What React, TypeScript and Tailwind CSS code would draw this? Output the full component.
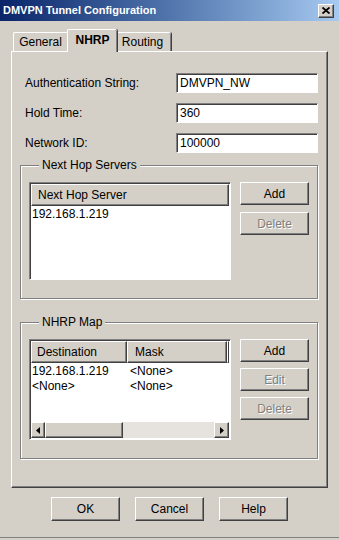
const raised =
  "border border-t-white border-l-white border-r-[#404040] border-b-[#404040] shadow-[inset_-1px_-1px_0_#808080] bg-[#d4d0c8]";
const sunken =
  "border border-t-[#808080] border-l-[#808080] border-r-white border-b-white shadow-[inset_1px_1px_0_#404040] bg-white";
const etched = "border border-[#808080] shadow-[inset_1px_1px_0_#fff,1px_1px_0_#fff]";

function Tab({ label, selected }: { label: string; selected?: boolean }) {
  if (selected) {
    return (
      <div className="relative z-10 -mx-[2px] -mb-px flex h-[23px] w-[50px] items-center justify-center rounded-t-[2px] border-l border-t border-white bg-[#d4d0c8] pb-[2px] font-bold shadow-[1px_0_0_#404040,inset_-1px_0_0_#808080]">
        {label}
      </div>
    );
  }
  return (
    <div className="flex h-[19px] w-[56px] items-center justify-center rounded-t-[2px] border-l border-t border-white pr-[2px] shadow-[1px_0_0_#404040,inset_-1px_0_0_#808080]">
      {label}
    </div>
  );
}

function Field({ label, value }: { label: string; value: string }) {
  return (
    <div className="flex h-[20px] items-center">
      <span className="w-[151px]">{label}</span>
      <div className={`${sunken} flex h-[20px] w-[142px] items-center px-[3px]`}>{value}</div>
    </div>
  );
}

function Button({ label, disabled, w = "w-[69px]", h = "h-[23px]" }: { label: string; disabled?: boolean; w?: string; h?: string }) {
  return (
    <div
      className={`${raised} ${w} ${h} flex items-center justify-center ${
        disabled ? "text-[#808080] [text-shadow:1px_1px_0_#fff]" : ""
      }`}
    >
      {label}
    </div>
  );
}

function Group({ title, className, children }: { title: string; className: string; children: React.ReactNode }) {
  return (
    <div className={`relative w-[298px] ${etched} ${className}`}>
      <span className="absolute -top-[8px] left-[18px] bg-[#d4d0c8] px-[3px] leading-[15px]">{title}</span>
      {children}
    </div>
  );
}

function Arrow({ dir }: { dir: "left" | "right" }) {
  return (
    <svg width="4" height="7" viewBox="0 0 4 7">
      {dir === "left" ? <path d="M4 0 L0 3.5 L4 7 Z" fill="#000" /> : <path d="M0 0 L4 3.5 L0 7 Z" fill="#000" />}
    </svg>
  );
}

export default function App() {
  return (
    <div className="flex h-[540px] w-[339px] flex-col bg-[#d4d0c8] font-['Liberation_Sans',Arial,sans-serif] text-[12px] leading-none text-black">
      <div className="flex h-[21px] shrink-0 items-center justify-between bg-gradient-to-r from-[#0a246a] to-[#a6caf0] pl-[3px] pr-[5px]">
        <span className="text-[11px] font-bold text-white">DMVPN Tunnel Configuration</span>
        <div className={`${raised} flex h-[14px] w-[16px] items-center justify-center`}>
          <svg width="8" height="7" viewBox="0 0 8 7">
            <path d="M0.5 0.5 L7.5 6.5 M7.5 0.5 L0.5 6.5" stroke="#000" strokeWidth="1.8" />
          </svg>
        </div>
      </div>

      <div className="flex h-[30px] shrink-0 items-end pl-[13px]">
        <Tab label="General" />
        <Tab label="NHRP" selected />
        <Tab label="Routing" />
      </div>

      <div className="ml-[11px] flex h-[437px] w-[317px] shrink-0 flex-col border border-t-white border-l-white border-r-[#404040] border-b-[#404040] pl-[8px] pt-[21px] shadow-[inset_-1px_-1px_0_#808080]">
        <div className="flex flex-col gap-[10px] pl-[5px]">
          <Field label="Authentication String:" value="DMVPN_NW" />
          <Field label="Hold Time:" value="360" />
          <Field label="Network ID:" value="100000" />
        </div>

        <Group title="Next Hop Servers" className="mt-[12px] flex h-[134px] gap-[9px] pl-[8px] pt-[16px]">
          <div className={`${sunken} flex h-[98px] w-[202px] flex-col p-[1px]`}>
            <div className={`${raised} flex h-[22px] shrink-0 items-center pl-[6px]`}>Next Hop Server</div>
            <div className="flex h-[15px] items-center pl-[1px]">192.168.1.219</div>
          </div>
          <div className="flex flex-col gap-[7px]">
            <Button label="Add" />
            <Button label="Delete" disabled />
          </div>
        </Group>

        <Group title="NHRP Map" className="mt-[23px] flex h-[137px] gap-[9px] pl-[8px] pt-[16px]">
          <div className={`${sunken} flex h-[101px] w-[202px] flex-col p-[1px]`}>
            <div className="flex h-[22px] shrink-0">
              <div className={`${raised} flex w-[96px] items-center pl-[5px]`}>Destination</div>
              <div className={`${raised} flex w-[100px] items-center pl-[7px]`}>Mask</div>
              <div className={`${raised} flex-1`} />
            </div>
            <div className="flex h-[15px] items-center">
              <span className="w-[99px] pl-[1px]">192.168.1.219</span>
              <span>&lt;None&gt;</span>
            </div>
            <div className="flex h-[15px] items-center">
              <span className="w-[99px] pl-[1px]">&lt;None&gt;</span>
              <span>&lt;None&gt;</span>
            </div>
            <div className="flex-1" />
            <div className="flex h-[16px] shrink-0">
              <div className={`${raised} flex w-[14px] items-center justify-center`}>
                <Arrow dir="left" />
              </div>
              <div className={`${raised} w-[78px]`} />
              <div className="flex-1 bg-[#e6e3de]" />
              <div className={`${raised} flex w-[15px] items-center justify-center`}>
                <Arrow dir="right" />
              </div>
            </div>
          </div>
          <div className="flex flex-col gap-[6px]">
            <Button label="Add" />
            <Button label="Edit" disabled />
            <Button label="Delete" disabled />
          </div>
        </Group>
      </div>

      <div className="flex shrink-0 gap-[15px] pl-[51px] pt-[9px]">
        <Button label="OK" h="h-[24px]" />
        <Button label="Cancel" h="h-[24px]" />
        <Button label="Help" h="h-[24px]" />
      </div>
      <div className="flex-1" />
      <div className="h-[3px] shrink-0 border-t border-[#808080]" />
    </div>
  );
}
